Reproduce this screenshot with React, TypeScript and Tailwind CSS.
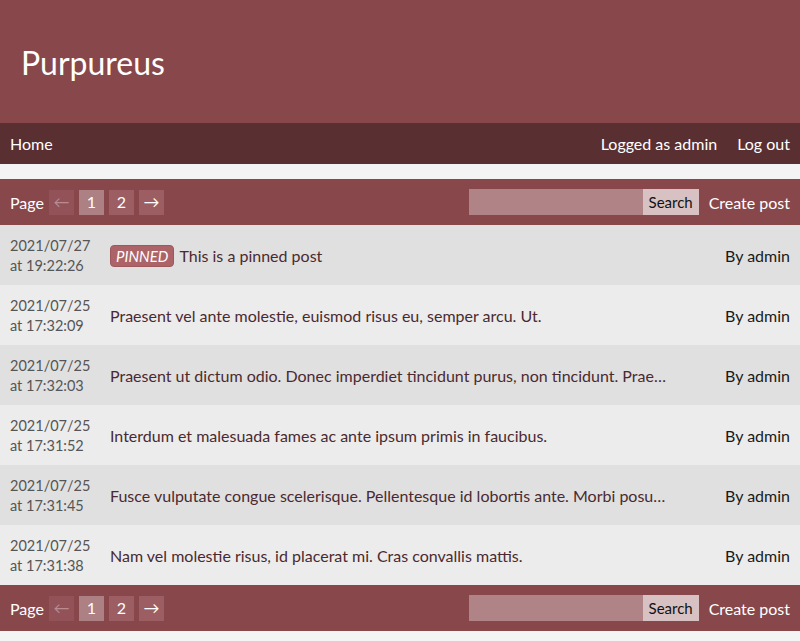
import React from 'react';

type Post = {
    date: string;
    time: string;
    title: string;
    author: string;
    pinned?: boolean;
};

const posts: Post[] = [
    { date: '2021/07/27', time: '19:22:26', title: 'This is a pinned post', author: 'admin', pinned: true },
    { date: '2021/07/25', time: '17:32:09', title: 'Praesent vel ante molestie, euismod risus eu, semper arcu. Ut.', author: 'admin' },
    {
        date: '2021/07/25',
        time: '17:32:03',
        title: 'Praesent ut dictum odio. Donec imperdiet tincidunt purus, non tincidunt. Praesent sed lorem vitae nunc.',
        author: 'admin',
    },
    { date: '2021/07/25', time: '17:31:52', title: 'Interdum et malesuada fames ac ante ipsum primis in faucibus.', author: 'admin' },
    {
        date: '2021/07/25',
        time: '17:31:45',
        title: 'Fusce vulputate congue scelerisque. Pellentesque id lobortis ante. Morbi posuere quam at nisi.',
        author: 'admin',
    },
    { date: '2021/07/25', time: '17:31:38', title: 'Nam vel molestie risus, id placerat mi. Cras convallis mattis.', author: 'admin' },
];

function Pager() {
    return (
        <div className="flex items-center h-[46px] px-[10px] bg-[#88474b] text-white">
            <span className="mr-[5px] pt-[1px]">Page</span>
            <div className="flex gap-[5px]">
                <span className="w-[25px] h-[25px] flex items-center justify-center bg-[#925257] text-[#b98d90]">←</span>
                <span className="w-[25px] h-[25px] flex items-center justify-center bg-[#ad8083]">1</span>
                <span className="w-[25px] h-[25px] flex items-center justify-center bg-[#9c5e63]">2</span>
                <span className="w-[25px] h-[25px] flex items-center justify-center bg-[#9c5e63]">→</span>
            </div>
            <div className="ml-auto flex items-center">
                <input className="w-[174px] h-[26px] bg-[#b08487] outline-none px-1" />
                <button className="h-[26px] w-[56px] bg-[#d7c1c2] text-[#111] text-[15px]">Search</button>
                <span className="ml-[10px] pt-[1px]">Create post</span>
            </div>
        </div>
    );
}

export default function App() {
    return (
        <div className="min-h-screen bg-[#f4f4f4] font-['Lato','Open_Sans',sans-serif] text-base">
            <header className="h-[123px] bg-[#88474b] flex items-center px-[21px]">
                <h1 className="text-[32px] text-white leading-none pt-[2px]">Purpureus</h1>
            </header>
            <nav className="h-[41px] bg-[#5a2f32] text-white flex items-center px-[10px] pt-[1px]">
                <span>Home</span>
                <div className="ml-auto flex gap-[20px]">
                    <span>Logged as admin</span>
                    <span>Log out</span>
                </div>
            </nav>
            <div className="pt-[15px]">
                <Pager />
                <div>
                    {posts.map((p, i) => (
                        <div
                            key={i}
                            className={`flex items-center h-[60px] px-[10px] pt-[1px] ${i % 2 === 0 ? 'bg-[#e0e0e0]' : 'bg-[#ececec]'}`}
                        >
                            <div className="w-[100px] shrink-0 text-[14.5px] leading-[20px] text-[#555]">
                                <div>{p.date}</div>
                                <div>at {p.time}</div>
                            </div>
                            <div className="flex-1 min-w-0 mr-[55px] truncate text-[#4a2a30]">
                                {p.pinned && (
                                    <span className="inline-block italic text-[15px] leading-[20px] text-white bg-[#ad6468] rounded-[4px] px-[5px] mr-[5px] border border-[#9d585c]">
                                        PINNED
                                    </span>
                                )}
                                {p.title}
                            </div>
                            <div className="shrink-0 text-[#1a1a1a]">By {p.author}</div>
                        </div>
                    ))}
                </div>
                <Pager />
            </div>
        </div>
    );
}
